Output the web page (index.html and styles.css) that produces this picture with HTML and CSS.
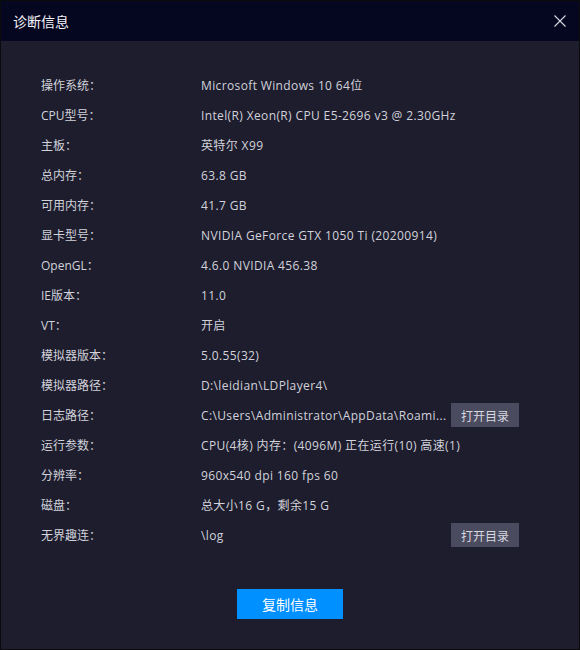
FILE: index.html
```html
<!DOCTYPE html>
<html lang="zh-CN">
<head>
  <meta charset="UTF-8" />
  <title>诊断信息</title>
  <link rel="stylesheet" href="styles.css">
</head>
<body>
  <div class="dialog">
    <div class="titlebar">
      <span class="title">诊断信息</span>
      <svg class="close" width="12" height="12" viewBox="0 0 12 12"><path d="M0.5 0.5 L11.5 11.5 M11.5 0.5 L0.5 11.5" stroke="#d8d8e0" stroke-width="1.1" fill="none"/></svg>
    </div>
    <div class="content">
      <div class="info">
        <div class="row"><span class="label">操作系统：</span><span class="value">Microsoft Windows 10 64位</span></div>
        <div class="row"><span class="label">CPU型号：</span><span class="value">Intel(R) Xeon(R) CPU E5-2696 v3 @ 2.30GHz</span></div>
        <div class="row"><span class="label">主板：</span><span class="value">英特尔 X99</span></div>
        <div class="row"><span class="label">总内存：</span><span class="value">63.8 GB</span></div>
        <div class="row"><span class="label">可用内存：</span><span class="value">41.7 GB</span></div>
        <div class="row"><span class="label">显卡型号：</span><span class="value">NVIDIA GeForce GTX 1050 Ti (20200914)</span></div>
        <div class="row"><span class="label">OpenGL：</span><span class="value">4.6.0 NVIDIA 456.38</span></div>
        <div class="row"><span class="label">IE版本：</span><span class="value">11.0</span></div>
        <div class="row"><span class="label">VT：</span><span class="value">开启</span></div>
        <div class="row"><span class="label">模拟器版本：</span><span class="value">5.0.55(32)</span></div>
        <div class="row"><span class="label">模拟器路径：</span><span class="value">D:\leidian\LDPlayer4\</span></div>
        <div class="row"><span class="label">日志路径：</span><span class="value path">C:\Users\Administrator\AppData\Roami...</span><button class="open-btn">打开目录</button></div>
        <div class="row"><span class="label">运行参数：</span><span class="value">CPU(4核) 内存：(4096M) 正在运行(10) 高速(1)</span></div>
        <div class="row"><span class="label">分辨率：</span><span class="value">960x540 dpi 160 fps 60</span></div>
        <div class="row"><span class="label">磁盘：</span><span class="value">总大小16 G，剩余15 G</span></div>
        <div class="row"><span class="label">无界趣连：</span><span class="value path">\log</span><button class="open-btn">打开目录</button></div>
      </div>
      <div class="actions">
        <button class="copy-btn">复制信息</button>
      </div>
    </div>
  </div>
</body>
</html>
```

FILE: styles.css
```css
body {
  margin: 0;
  background: #0c0c10;
  font-family: "Open Sans", "Noto Sans CJK SC", sans-serif;
}
.dialog {
  width: 578px;
  height: 648px;
  border: 1px solid #0b0b0e;
  background: #1d1d2e;
  display: flex;
  flex-direction: column;
}
.titlebar {
  height: 40px;
  background: #050620;
  display: flex;
  align-items: center;
  justify-content: space-between;
  padding: 0 13px 0 12px;
}
.title {
  color: #f4f4f8;
  font-size: 14px;
  font-family: "Noto Sans CJK SC", sans-serif;
}
.close {
  display: block;
  margin-top: -1px;
}
.content {
  padding: 29px 60px 0 40px;
}
.row {
  height: 30px;
  display: flex;
  align-items: center;
  font-size: 12px;
  color: #d2d2da;
}
.label {
  width: 160px;
  flex-shrink: 0;
}
.value {
  white-space: nowrap;
  letter-spacing: 0.37px;
}
.value.path {
  flex: 1;
  min-width: 0;
  margin-right: 8px;
}
.open-btn {
  width: 68px;
  height: 24px;
  border: none;
  background: #4a4b5e;
  color: #d8d8e0;
  font-size: 12px;
  font-family: "Noto Sans CJK SC", sans-serif;
  padding: 0;
  flex-shrink: 0;
}
.actions {
  display: flex;
  justify-content: center;
  margin-top: 39px;
  padding-left: 20px;
}
.copy-btn {
  width: 106px;
  height: 30px;
  border: none;
  background: #0090ff;
  color: #ffffff;
  font-size: 14px;
  font-family: "Noto Sans CJK SC", sans-serif;
  padding: 0;
}
```
